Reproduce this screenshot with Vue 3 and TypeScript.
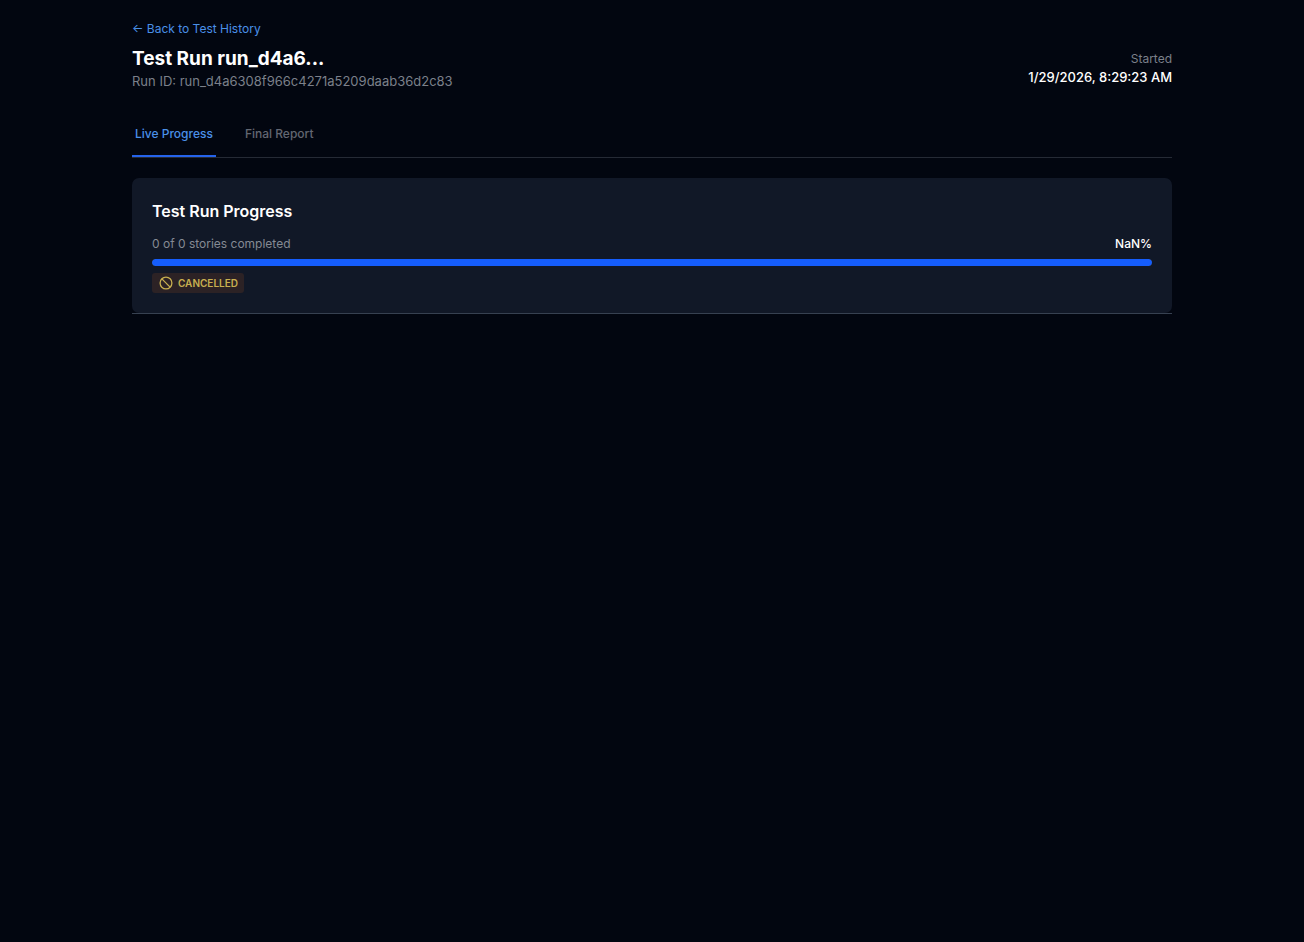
<script setup lang="ts">
import { ref } from 'vue'

type TabId = 'live' | 'report'

const tabs: { id: TabId; label: string }[] = [
  { id: 'live', label: 'Live Progress' },
  { id: 'report', label: 'Final Report' },
]
const activeTab = ref<TabId>('live')
const runId = 'run_d4a6308f966c4271a5209daab36d2c83'
const completed = 0
const total = 0
const percent = Math.round((completed / total) * 100)
</script>

<template>
  <main class="page">
    <div class="container">
      <a class="back" href="#history">← Back to Test History</a>
      <header class="header">
        <div>
          <h1 class="title">Test Run {{ runId.slice(0, 8) }}...</h1>
          <p class="run-id">Run ID: {{ runId }}</p>
        </div>
        <div class="started">
          <p class="started-label">Started</p>
          <p class="started-time">1/29/2026, 8:29:23 AM</p>
        </div>
      </header>

      <nav class="tabs">
        <button
          v-for="tab in tabs"
          :key="tab.id"
          type="button"
          class="tab"
          :class="{ active: activeTab === tab.id }"
          @click="activeTab = tab.id"
        >{{ tab.label }}</button>
      </nav>

      <div class="panel">
        <section class="card">
          <h2 class="card-title">Test Run Progress</h2>
          <div class="progress-row">
            <span class="muted">{{ completed }} of {{ total }} stories completed</span>
            <span class="percent">{{ percent }}%</span>
          </div>
          <div class="track"><div class="fill"></div></div>
          <span class="badge">
            <svg class="badge-icon" viewBox="0 0 14 14" fill="none" stroke="currentColor" stroke-width="1.3" aria-hidden="true">
              <circle cx="7" cy="7" r="5.9" />
              <path d="M2.9 2.9l8.2 8.2" />
            </svg>
            CANCELLED
          </span>
        </section>
      </div>
    </div>
  </main>
</template>

<style>
body {
  background: #020610;
}
</style>

<style scoped>
.page {
  box-sizing: border-box;
  min-height: 100vh;
  padding: 20px;
  background: #020610;
  color: #fff;
  font-family: Inter, "Liberation Sans", sans-serif;
  font-size: 12px;
  line-height: 18px;
}
.container {
  max-width: 1040px;
  margin: 0 auto;
}
h1, h2, p {
  margin: 0;
}
.back {
  display: block;
  width: fit-content;
  color: #4a90e8;
  text-decoration: none;
}
.header {
  display: flex;
  justify-content: space-between;
  align-items: center;
  margin-top: 8px;
}
.title {
  font-size: 19px;
  line-height: 26px;
  font-weight: 700;
}
.run-id {
  color: #7b808a;
  font-size: 13px;
  line-height: 18px;
}
.started {
  text-align: right;
}
.started-label {
  color: #7b808a;
}
.started-time {
  font-size: 13px;
  line-height: 18px;
  font-weight: 500;
}
.tabs {
  display: flex;
  gap: 26px;
  margin-top: 23px;
  border-bottom: 1px solid #252a35;
}
.tab {
  padding: 12px 3px;
  border: 0;
  border-bottom: 2px solid transparent;
  background: none;
  color: #636772;
  font: inherit;
  font-weight: 500;
  cursor: pointer;
}
.tab.active {
  color: #4a90e8;
  border-bottom-color: #2563eb;
}
.panel {
  margin-top: 20px;
  border-bottom: 1px solid #374151;
}
.card {
  padding: 20px;
  border-radius: 7px;
  background: #111827;
}
.card-title {
  font-size: 16px;
  line-height: 26px;
  font-weight: 600;
}
.progress-row {
  display: flex;
  justify-content: space-between;
  margin-top: 11px;
}
.muted {
  color: #858a94;
}
.percent {
  font-weight: 500;
}
.track {
  height: 7px;
  margin-top: 6px;
  border-radius: 4px;
  background: #374151;
  overflow: hidden;
}
.fill {
  height: 100%;
  border-radius: 4px;
  background: #155dfc;
}
.badge {
  display: flex;
  align-items: center;
  gap: 5px;
  width: fit-content;
  height: 20px;
  margin-top: 7px;
  padding: 0 6px 0 7px;
  border-radius: 3px;
  background: #2c2225;
  color: #c8b050;
  font-size: 10px;
  font-weight: 600;
}
.badge-icon {
  width: 14px;
  height: 14px;
}
</style>
